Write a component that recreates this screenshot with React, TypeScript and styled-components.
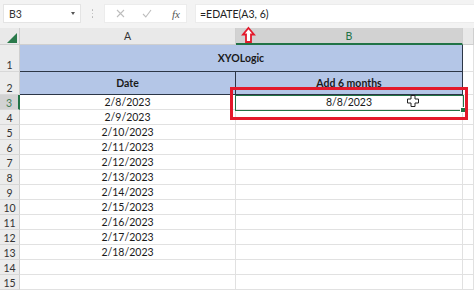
import React from "react";
import styled, { createGlobalStyle } from "styled-components";

const GlobalStyle = createGlobalStyle`
  html, body { margin: 0; padding: 0; background: #ffffff; }
  body { font-family: Lato, "Open Sans", "Noto Sans", sans-serif; }
`;

const Page = styled.div`
  position: relative;
  width: 474px;
  height: 290px;
  overflow: hidden;
  background: #ffffff;
`;

const TopBar = styled.div`
  height: 28px;
  box-sizing: border-box;
  padding: 4px 0 5px 3px;
  background: #f3f3f3;
  display: flex;
  align-items: stretch;
`;

const NameBox = styled.div`
  width: 78px;
  box-sizing: border-box;
  background: #ffffff;
  border: 1px solid #e4e4e4;
  display: flex;
  align-items: center;
  justify-content: space-between;
  padding: 0 5px 0 5px;
  font-size: 10.5px;
  color: #333;
`;

const DropTri = styled.span`
  width: 0;
  height: 0;
  border-left: 2.5px solid transparent;
  border-right: 2.5px solid transparent;
  border-top: 3px solid #555;
`;

const Grip = styled.div`
  width: 23px;
  display: flex;
  flex-direction: column;
  align-items: center;
  justify-content: center;
  gap: 2px;
  span {
    width: 1.5px;
    height: 1.5px;
    border-radius: 50%;
    background: #b5b5b5;
  }
`;

const FnBox = styled.div`
  width: 83px;
  box-sizing: border-box;
  background: #ffffff;
  border: 1px solid #ececec;
  display: flex;
  align-items: center;
  padding-left: 11px;
  gap: 17px;
`;

const Fx = styled.span`
  font-family: "Liberation Serif", "DejaVu Serif", serif;
  font-style: italic;
  font-size: 11px;
  color: #555;
  margin-left: 3px;
`;

const Formula = styled.div`
  flex: 1;
  margin-left: 8px;
  background: #ffffff;
  border: 1px solid #ececec;
  border-right: none;
  display: flex;
  align-items: center;
  padding-left: 4px;
  font-size: 10.5px;
  color: #222;
`;

const Sheet = styled.div`
  display: grid;
  grid-template-columns: 20px 216px 227px 11px;
  grid-template-rows: 17px 27px 23px repeat(13, 15px);
`;

const Corner = styled.div`
  position: relative;
  background: #e9e9e9;
  border-right: 1px solid #cfcfcf;
  border-bottom: 1px solid #cfcfcf;
  box-sizing: border-box;
  display: flex;
  align-items: flex-end;
  justify-content: flex-end;
  padding: 0 2px 1px 0;
  &::after {
    content: "";
    width: 10px;
    height: 10px;
    background: #2a7a4b;
    clip-path: polygon(100% 0, 100% 100%, 0 100%);
  }
`;

const ColHead = styled.div<{ $sel?: boolean }>`
  box-sizing: border-box;
  background: ${(p) => (p.$sel ? "#d2d2d2" : "#e9e9e9")};
  border-right: 1px solid #cfcfcf;
  border-bottom: ${(p) => (p.$sel ? "2px solid #217346" : "1px solid #cfcfcf")};
  color: ${(p) => (p.$sel ? "#217346" : "#333")};
  font-size: 10.5px;
  display: flex;
  align-items: center;
  justify-content: center;
`;

const RowHead = styled.div<{ $sel?: boolean }>`
  box-sizing: border-box;
  background: ${(p) => (p.$sel ? "#d2d2d2" : "#ececec")};
  border-right: ${(p) => (p.$sel ? "2px solid #217346" : "1px solid #cfcfcf")};
  border-bottom: 1px solid #d8d8d8;
  color: ${(p) => (p.$sel ? "#3f7d59" : "#333")};
  font-size: 10.5px;
  display: flex;
  align-items: flex-end;
  justify-content: center;
  line-height: 1;
  padding-bottom: 1px;
`;

const Cell = styled.div<{
  $span?: number;
  $blue?: boolean;
  $bold?: boolean;
  $right?: string;
  $bottom?: string;
}>`
  box-sizing: border-box;
  grid-column: span ${(p) => p.$span ?? 1};
  background: ${(p) => (p.$blue ? "#b4c6e7" : "#ffffff")};
  border-right: 1px solid ${(p) => p.$right ?? "#e1e1e1"};
  border-bottom: 1px solid ${(p) => p.$bottom ?? "#e1e1e1"};
  font-weight: ${(p) => (p.$bold ? 700 : 400)};
  font-size: 10.5px;
  color: #1a1a1a;
  display: flex;
  align-items: center;
  justify-content: center;
  white-space: nowrap;
`;

const Selection = styled.div`
  position: absolute;
  left: 235px;
  top: 95px;
  width: 229px;
  height: 16px;
  box-sizing: border-box;
  border: 1px solid #217346;
  &::after {
    content: "";
    position: absolute;
    right: -3px;
    bottom: -3px;
    width: 4px;
    height: 4px;
    background: #217346;
    border: 1px solid #fff;
  }
`;

const Highlight = styled.div`
  position: absolute;
  left: 230px;
  top: 87px;
  width: 238px;
  height: 33px;
  box-sizing: border-box;
  border: 3px solid #e3192b;
`;

const Overlay = styled.svg`
  position: absolute;
  overflow: visible;
`;

const dark = "#2c3646";

const dates = [
  "2/8/2023",
  "2/9/2023",
  "2/10/2023",
  "2/11/2023",
  "2/12/2023",
  "2/13/2023",
  "2/14/2023",
  "2/15/2023",
  "2/16/2023",
  "2/17/2023",
  "2/18/2023",
];

export default function App() {
  const rows = Array.from({ length: 13 }, (_, i) => i + 3);
  return (
    <Page>
      <GlobalStyle />
      <TopBar>
        <NameBox>
          <span>B3</span>
          <DropTri />
        </NameBox>
        <Grip>
          <span />
          <span />
          <span />
        </Grip>
        <FnBox>
          <svg width="9" height="9" viewBox="0 0 9 9">
            <path d="M1 1 L8 8 M8 1 L1 8" stroke="#bdbdbd" strokeWidth="1.1" fill="none" />
          </svg>
          <svg width="10" height="9" viewBox="0 0 10 9">
            <path d="M1 5 L3.8 8 L9 1" stroke="#bdbdbd" strokeWidth="1.1" fill="none" />
          </svg>
          <Fx>fx</Fx>
        </FnBox>
        <Formula>=EDATE(A3, 6)</Formula>
      </TopBar>
      <Sheet>
        <Corner />
        <ColHead>A</ColHead>
        <ColHead $sel>B</ColHead>
        <ColHead />

        <RowHead>1</RowHead>
        <Cell $span={2} $blue $bold $right={dark} $bottom={dark}>
          XYOLogic
        </Cell>
        <Cell />

        <RowHead>2</RowHead>
        <Cell $blue $bold $right={dark} $bottom={dark}>
          Date
        </Cell>
        <Cell $blue $bold $right={dark} $bottom={dark}>
          Add 6 months
        </Cell>
        <Cell />

        {rows.map((r) => (
          <React.Fragment key={r}>
            <RowHead $sel={r === 3}>{r}</RowHead>
            <Cell>{dates[r - 3] ?? ""}</Cell>
            <Cell>{r === 3 ? "8/8/2023" : ""}</Cell>
            <Cell />
          </React.Fragment>
        ))}
      </Sheet>

      <Selection />
      <Highlight />

      <Overlay style={{ left: 242, top: 27 }} width="13" height="16" viewBox="0 0 13 16">
        <path
          d="M6.5 1 L12 7.5 L9 7.5 L9 15 L4 15 L4 7.5 L1 7.5 Z"
          fill="#ffffff"
          stroke="#e3192b"
          strokeWidth="1.8"
          strokeLinejoin="miter"
        />
      </Overlay>

      <Overlay style={{ left: 407, top: 95 }} width="12" height="12" viewBox="0 0 12 12">
        <path
          d="M4 0.5 H8 V4 H11.5 V8 H8 V11.5 H4 V8 H0.5 V4 H4 Z"
          fill="#ffffff"
          stroke="#222"
          strokeWidth="1"
        />
      </Overlay>
    </Page>
  );
}
